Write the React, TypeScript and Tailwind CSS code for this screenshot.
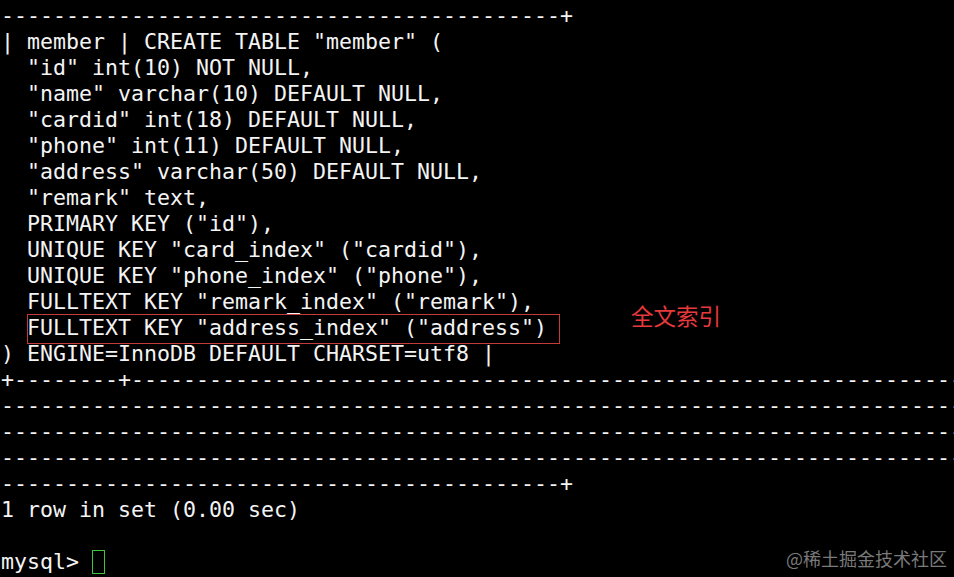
const dash = (n: number) => "-".repeat(n);

const lines: string[] = [
  dash(43) + "+",
  '| member | CREATE TABLE "member" (',
  '  "id" int(10) NOT NULL,',
  '  "name" varchar(10) DEFAULT NULL,',
  '  "cardid" int(18) DEFAULT NULL,',
  '  "phone" int(11) DEFAULT NULL,',
  '  "address" varchar(50) DEFAULT NULL,',
  '  "remark" text,',
  '  PRIMARY KEY ("id"),',
  '  UNIQUE KEY "card_index" ("cardid"),',
  '  UNIQUE KEY "phone_index" ("phone"),',
  '  FULLTEXT KEY "remark_index" ("remark"),',
  '  FULLTEXT KEY "address_index" ("address")',
  ") ENGINE=InnoDB DEFAULT CHARSET=utf8 |",
  "+" + dash(8) + "+" + dash(64),
  dash(74),
  dash(74),
  dash(74),
  dash(43) + "+",
  "1 row in set (0.00 sec)",
  "",
];

export default function App() {
  return (
    <div className="relative w-[954px] h-[577px] overflow-hidden bg-black text-[#f4f4f4] pt-[3px] pl-[1px] font-['DejaVu_Sans_Mono',monospace] text-[21.6px] leading-[26px]">
      {lines.map((line, i) => (
        <div key={i} className="h-[26px] whitespace-pre">
          {line}
        </div>
      ))}
      <div className="flex items-center h-[26px] whitespace-pre">
        <span>mysql&gt; </span>
        <span className="inline-block w-[13px] h-[24px] border border-[#3fc43f]" />
      </div>

      {/* annotation box */}
      <div className="absolute left-[27px] top-[314px] w-[533px] h-[30px] border border-[#c33b3b]" />
      <div className="absolute left-[631px] top-[304px] text-[22.5px] leading-[23px] text-[#e8393c] font-['Noto_Sans_CJK_SC',sans-serif]">
        全文索引
      </div>

      {/* watermark */}
      <div className="absolute left-[786px] top-[548px] text-[18px] leading-[20px] text-[#7a7a7a] font-['Noto_Sans_CJK_SC',sans-serif]">
        @稀土掘金技术社区
      </div>
    </div>
  );
}
